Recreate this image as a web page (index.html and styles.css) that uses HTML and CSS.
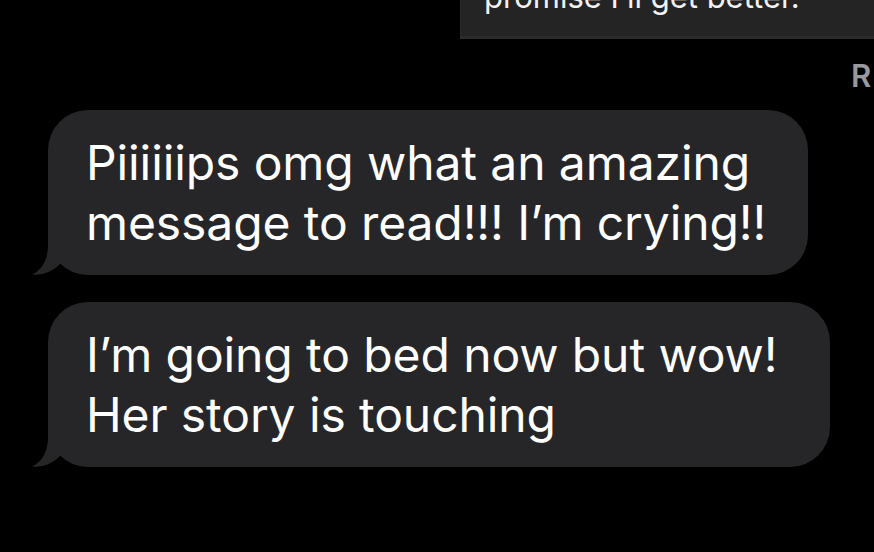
FILE: index.html
```html
<!DOCTYPE html>
<html lang="en">
<head>
<meta charset="utf-8">
<title>Messages</title>
<link rel="stylesheet" href="styles.css">
</head>
<body>
<div class="thread">
  <div class="sent">
    <div class="sent-text">promise I’ll get better.</div>
  </div>
  <div class="read">Read 11:42 PM</div>
  <div class="bubble first">
    <span class="line">Piiiiiips omg what an amazing</span>
    <span class="line">message to read!!! I’m crying!!</span>
    <svg class="tail" viewBox="0 0 30 45" width="30" height="45" aria-hidden="true"><path d="M16 0 L16 15 C16 30 10 40 0 44.5 C10 45.5 20 42 28 34 L28 0 Z"/></svg>
  </div>
  <div class="bubble second">
    <span class="line">I’m going to bed now but wow!</span>
    <span class="line">Her story is touching</span>
    <svg class="tail" viewBox="0 0 30 45" width="30" height="45" aria-hidden="true"><path d="M16 0 L16 15 C16 30 10 40 0 44.5 C10 45.5 20 42 28 34 L28 0 Z"/></svg>
  </div>
</div>
</body>
</html>
```

FILE: styles.css
```css
html, body {
  margin: 0;
  padding: 0;
  background: #000;
}
body {
  width: 874px;
  height: 552px;
  overflow: hidden;
  font-family: Inter, "Noto Sans", "Liberation Sans", sans-serif;
  color: #fff;
}
.thread {
  display: flex;
  flex-direction: column;
  align-items: flex-start;
}
.sent {
  align-self: flex-end;
  width: 430px;
  margin-right: -17px;
  height: 36px;
  background: #242424;
  border-left: 1px solid #2c2c2c;
  border-bottom: 3px solid #2b2b2b;
  overflow: hidden;
}
.sent-text {
  margin-top: -23px;
  padding-left: 23px;
  font-size: 31px;
  line-height: 40px;
  white-space: nowrap;
  color: #f2f2f2;
}
.read {
  margin-top: 22px;
  padding-left: 851px;
  font-size: 31px;
  line-height: 30px;
  font-weight: 600;
  letter-spacing: 3px;
  color: #98989d;
  white-space: nowrap;
}
.bubble {
  position: relative;
  box-sizing: border-box;
  margin-left: 48px;
  padding: 22.5px 38px 22.5px 38px;
  background: #262628;
  border-radius: 40px;
  font-size: 48px;
  line-height: 60px;
  letter-spacing: -0.1px;
}
.bubble.first {
  margin-top: 19px;
  width: 760px;
}
.bubble.second {
  margin-top: 27px;
  width: 782px;
}
.line {
  display: block;
  white-space: nowrap;
}
.tail {
  position: absolute;
  left: -16px;
  bottom: 0;
  fill: #262628;
  display: block;
}
```
